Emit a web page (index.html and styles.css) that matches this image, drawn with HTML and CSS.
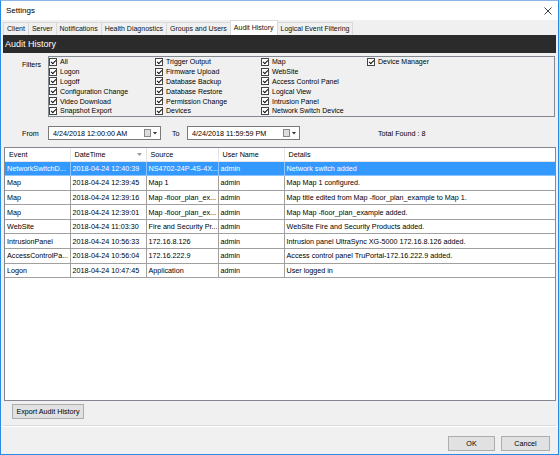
FILE: index.html
```html
<!DOCTYPE html>
<html lang="en">
  <head>
    <meta charset="UTF-8" />
    <title>Settings</title>
    <link rel="stylesheet" href="styles.css">
  </head>
  <body>
    <div class="window">
      <!-- Title bar -->
      <div class="titlebar">
        <span>Settings</span>
        <svg class="close" viewBox="0 0 8 8" width="8" height="8">
          <path d="M0.5 0.5 L7.5 7.5 M7.5 0.5 L0.5 7.5" stroke="#111" stroke-width="0.8" />
        </svg>
      </div>

      <!-- Tabs -->
      <div class="tabs">
        <div class="tab">Client</div>
        <div class="tab">Server</div>
        <div class="tab">Notifications</div>
        <div class="tab">Health Diagnostics</div>
        <div class="tab">Groups and Users</div>
        <div class="tab active">Audit History</div>
        <div class="tab">Logical Event Filtering</div>
      </div>

      <div class="page">
        <div class="page-title">Audit History</div>

        <!-- Filters -->
        <div class="filters-row">
          <div class="filters-label">Filters</div>
          <div class="filters">
            <label class="check"><span class="cb"></span>All</label>
            <label class="check"><span class="cb"></span>Logon</label>
            <label class="check"><span class="cb"></span>Logoff</label>
            <label class="check"><span class="cb"></span>Configuration Change</label>
            <label class="check"><span class="cb"></span>Video Download</label>
            <label class="check"><span class="cb"></span>Snapshot Export</label>
            <label class="check"><span class="cb"></span>Trigger Output</label>
            <label class="check"><span class="cb"></span>Firmware Upload</label>
            <label class="check"><span class="cb"></span>Database Backup</label>
            <label class="check"><span class="cb"></span>Database Restore</label>
            <label class="check"><span class="cb"></span>Permission Change</label>
            <label class="check"><span class="cb"></span>Devices</label>
            <label class="check"><span class="cb"></span>Map</label>
            <label class="check"><span class="cb"></span>WebSite</label>
            <label class="check"><span class="cb"></span>Access Control Panel</label>
            <label class="check"><span class="cb"></span>Logical View</label>
            <label class="check"><span class="cb"></span>Intrusion Panel</label>
            <label class="check"><span class="cb"></span>Network Switch Device</label>
            <label class="check"><span class="cb"></span>Device Manager</label>
          </div>
        </div>

        <!-- Date range -->
        <div class="range-row">
          <span class="range-label">From</span>
          <div class="datebox">
            <span>4/24/2018 12:00:00 AM</span>
            <svg class="cal" viewBox="0 0 14 8" width="14" height="8">
              <rect x="0.5" y="0.5" width="6" height="7" fill="#ddd" stroke="#888" />
              <path d="M9 3 L13 3 L11 5.5 Z" fill="#333" />
            </svg>
          </div>
          <span class="range-label to">To</span>
          <div class="datebox">
            <span>4/24/2018 11:59:59 PM</span>
            <svg class="cal" viewBox="0 0 14 8" width="14" height="8">
              <rect x="0.5" y="0.5" width="6" height="7" fill="#ddd" stroke="#888" />
              <path d="M9 3 L13 3 L11 5.5 Z" fill="#333" />
            </svg>
          </div>
          <span class="total">Total Found : 8</span>
        </div>

        <!-- Audit grid -->
        <div class="grid">
          <table>
            <colgroup>
              <col style="width: 65px" />
              <col style="width: 76px" />
              <col style="width: 72px" />
              <col style="width: 66px" />
              <col />
            </colgroup>
            <thead>
              <tr>
                <th>Event</th>
                <th class="sorted">DateTime
                  <svg class="sort" viewBox="0 0 5 3" width="5" height="3"><path d="M0 0 L5 0 L2.5 3 Z" fill="#999" /></svg>
                </th>
                <th>Source</th>
                <th>User Name</th>
                <th>Details</th>
              </tr>
            </thead>
            <tbody>
              <tr class="selected">
                <td>NetworkSwitchD...</td><td>2018-04-24 12:40:39</td><td>NS4702-24P-4S-4X...</td><td>admin</td><td>Network switch added</td>
              </tr>
              <tr>
                <td>Map</td><td>2018-04-24 12:39:45</td><td>Map 1</td><td>admin</td><td>Map Map 1 configured.</td>
              </tr>
              <tr>
                <td>Map</td><td>2018-04-24 12:39:16</td><td>Map -floor_plan_ex...</td><td>admin</td><td>Map title edited from Map -floor_plan_example to Map 1.</td>
              </tr>
              <tr>
                <td>Map</td><td>2018-04-24 12:39:01</td><td>Map -floor_plan_ex...</td><td>admin</td><td>Map Map -floor_plan_example added.</td>
              </tr>
              <tr>
                <td>WebSite</td><td>2018-04-24 11:03:30</td><td>Fire and Security Pr...</td><td>admin</td><td>WebSite Fire and Security Products added.</td>
              </tr>
              <tr>
                <td>IntrusionPanel</td><td>2018-04-24 10:56:33</td><td>172.16.8.126</td><td>admin</td><td>Intrusion panel UltraSync XG-5000 172.16.8.126 added.</td>
              </tr>
              <tr>
                <td>AccessControlPa...</td><td>2018-04-24 10:56:04</td><td>172.16.222.9</td><td>admin</td><td>Access control panel TruPortal-172.16.222.9 added.</td>
              </tr>
              <tr>
                <td>Logon</td><td>2018-04-24 10:47:45</td><td>Application</td><td>admin</td><td>User logged in</td>
              </tr>
            </tbody>
          </table>
        </div>

        <div class="export-row">
          <button class="btn export">Export Audit History</button>
        </div>
      </div>

      <!-- Dialog buttons -->
      <div class="footer">
        <button class="btn ok">OK</button>
        <button class="btn cancel">Cancel</button>
      </div>
    </div>
  </body>
</html>
```

FILE: styles.css
```css
* {
  margin: 0;
  padding: 0;
  box-sizing: border-box;
}

body {
  font-family: "Liberation Sans", Arial, sans-serif;
  font-size: 7px;
  color: #000;
  background: #fff;
}

.window {
  width: 559px;
  height: 455px;
  border: 1px solid #2b8ae2;
  border-top-color: #8ab8e6;
  background: #f0f0f0;
  display: flex;
  flex-direction: column;
}

/* Title bar */
.titlebar {
  height: 19px;
  background: #fff;
  display: flex;
  align-items: center;
  justify-content: space-between;
  padding: 0 6px 0 5px;
  font-size: 8px;
}

/* Tabs */
.tabs {
  display: flex;
  align-items: flex-end;
  height: 14px;
  margin: 1px 0 0 3px;
}

.tab {
  height: 13px;
  line-height: 12px;
  padding: 0 3px;
  border: 1px solid #d9d9d9;
  border-bottom: none;
  margin-left: -1px;
  background: #f0f0f0;
  color: #111;
  white-space: nowrap;
}

.tab.active {
  height: 15px;
  line-height: 14px;
  background: #fff;
  border-color: #d9d9d9;
  position: relative;
  z-index: 1;
}

/* Tab page */
.page {
  flex: 1;
  display: flex;
  flex-direction: column;
  margin: 0 2px;
  border-bottom: 1px solid #dcdcdc;
}

.page-title {
  height: 18px;
  line-height: 18px;
  padding-left: 2px;
  background: #2b2b2b;
  color: #fff;
  font-size: 9px;
}

.filters-row {
  display: flex;
  margin-top: 3px;
}

.filters-label {
  width: 45px;
  padding: 5px 0 0 19px;
}

.filters {
  flex: 1;
  height: 61px;
  margin-right: 1px;
  border: 1px solid #828790;
  display: grid;
  grid-auto-flow: column;
  grid-template-rows: repeat(6, 9.8px);
  grid-template-columns: repeat(4, 106px);
  padding-top: 0;
}

.check {
  display: flex;
  align-items: center;
  gap: 3px;
  white-space: nowrap;
}

.cb {
  position: relative;
  width: 8px;
  height: 8px;
  border: 1px solid #444;
  background: #fff;
  flex-shrink: 0;
}

.cb::after {
  content: "";
  position: absolute;
  left: 2px;
  top: 0;
  width: 2px;
  height: 4px;
  border: solid #111;
  border-width: 0 1px 1px 0;
  transform: rotate(45deg);
}

/* Date range */
.range-row {
  display: flex;
  align-items: center;
  height: 14px;
  margin-top: 9px;
  font-size: 7.2px;
}

.range-label {
  width: 45px;
  padding-left: 19px;
}

.range-label.to {
  width: 26px;
  padding-left: 11px;
}

.datebox {
  width: 113px;
  height: 14px;
  border: 1px solid #7a7a7a;
  background: #fff;
  display: flex;
  align-items: center;
  justify-content: space-between;
  padding: 0 2px 0 4px;
}

.total {
  margin-left: 78px;
}

/* Grid */
.grid {
  flex: 1;
  margin: 7px 0 0 1px;
  background: #fff;
  border: 1px solid #828790;
  overflow: hidden;
}

.grid table {
  width: 100%;
  table-layout: fixed;
  border-collapse: collapse;
  font-size: 7.2px;
}

.grid th {
  height: 13px;
  font-weight: normal;
  text-align: left;
  padding-left: 4px;
  border-right: 1px solid #e5e5e5;
  border-bottom: 1px solid #e5e5e5;
  white-space: nowrap;
}

.grid th.sorted {
  position: relative;
}

.sort {
  position: absolute;
  right: 4px;
  top: 5px;
}

.grid td {
  height: 14.6px;
  padding: 0 2px;
  border: 1px solid #a0a0a0;
  border-top: none;
  white-space: nowrap;
  overflow: hidden;
}

.grid td:first-child {
  border-left: none;
}

.grid td:last-child,
.grid th:last-child {
  border-right: none;
}

.grid tr.selected td {
  background: #3399ff;
  color: #fff;
  border-color: #8cc4ff;
}

/* Buttons */
.btn {
  font-family: inherit;
  font-size: 7.2px;
  background: #e1e1e1;
  border: 1px solid #adadad;
  height: 15px;
  color: #000;
}

.export-row {
  height: 24px;
  padding: 3px 0 0 9px;
}

.export {
  width: 72px;
}

.footer {
  height: 28px;
  border-top: 1px solid #fff;
  display: flex;
  justify-content: flex-end;
  gap: 6px;
  padding: 9px 8px 0 0;
}

.ok {
  width: 47px;
}

.cancel {
  width: 49px;
}
```
